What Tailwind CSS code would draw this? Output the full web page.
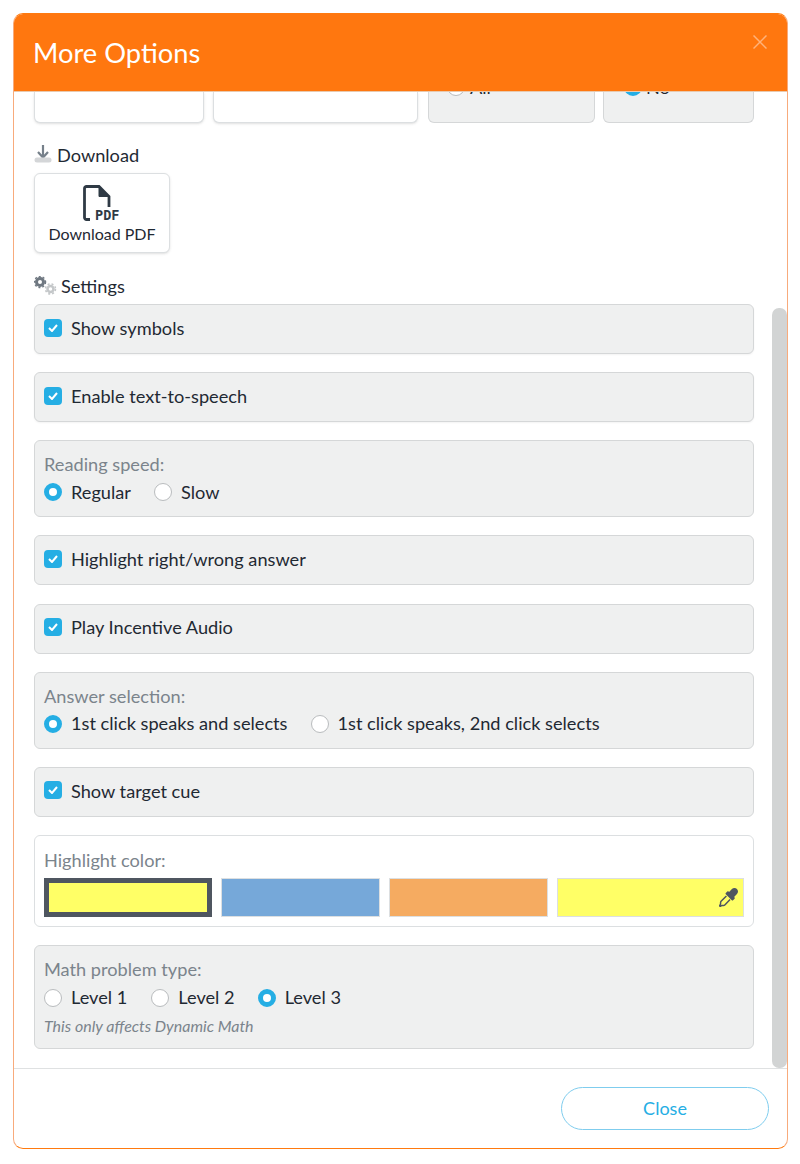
<!DOCTYPE html>
<html lang="en">
<head>
    <meta charset="UTF-8">
    <title>More Options</title>
    <script src="https://cdn.jsdelivr.net/npm/@tailwindcss/browser@4"></script>
</head>
<body class="bg-white font-['Lato',sans-serif] text-[#1f2933]">
    <div class="h-[1164px] pt-[13px] pl-[13px] pr-[12px]">
        <div class="relative flex flex-col h-[1136px] border border-x-[#f8ab7c] border-y-[#ff7a0f] rounded-[10px] overflow-hidden bg-white">
            <!-- Header -->
            <div class="flex justify-between h-[79px] shrink-0 -mx-px -mt-px bg-[#ff770f] border-b border-[#e8c9ae] pl-[20px] pr-[21px] text-white">
                <h2 class="text-[27.3px] leading-[80px]">More Options</h2>
                <svg class="mt-[22px]" width="14" height="14" viewBox="0 0 14 14" fill="none" stroke="#ffb27a" stroke-width="1.5"><path d="M0.5 0.5L13.5 13.5M13.5 0.5L0.5 13.5"/></svg>
            </div>

            <!-- Body -->
            <div class="relative h-[976px] shrink-0 overflow-hidden pl-[20px] pr-[33px]">
                <!-- Scrolled cards -->
                <div class="flex h-[31px] text-[18.2px]">
                    <div class="w-[170px] h-[31px] bg-white border border-[#dcdfe1] border-t-0 rounded-b-[6px] shadow-sm"></div>
                    <div class="ml-[9px] w-[205px] h-[31px] bg-white border border-[#dcdfe1] border-t-0 rounded-b-[6px] shadow-sm"></div>
                    <div class="relative ml-[10px] w-[167px] h-[31px] bg-[#eff0f0] border border-[#d5d7d8] border-t-0 rounded-b-[6px] overflow-hidden">
                        <span class="absolute left-[18px] top-[-14px] w-[18px] h-[18px] rounded-full bg-white border border-[#b9bcbe]"></span>
                        <span class="absolute left-[41px] top-[-17px] leading-[24px]">All</span>
                    </div>
                    <div class="relative ml-[8px] w-[151px] h-[31px] bg-[#eff0f0] border border-[#d5d7d8] border-t-0 rounded-b-[6px] overflow-hidden">
                        <span class="absolute left-[20px] top-[-14px] w-[18px] h-[18px] rounded-full bg-[#25aee4]"></span>
                        <span class="absolute left-[42px] top-[-17px] leading-[24px]">No</span>
                    </div>
                </div>

                <!-- Download -->
                <div class="flex items-center h-[24px] mt-[21px] text-[18.2px]">
                    <svg width="18" height="18" viewBox="0 0 18 18" class="mr-[5px] -mt-[5px]">
                        <path d="M9 0v12M4 7l5 5.500L14 7" fill="none" stroke="#76808a" stroke-width="2.200"/>
                        <rect x="0.500" y="12.500" width="17" height="5" rx="2.500" fill="#d4d6d8"/>
                    </svg>
                    Download
                </div>
                <div class="relative flex flex-col items-center w-[136px] h-[80px] mt-[5px] bg-white border border-[#dcdfe1] rounded-[6px] shadow-sm pt-[11px] text-[16px]">
                    <svg class="-ml-[10px]" width="28" height="36" viewBox="0 0 28 36" fill="none">
                        <path d="M7 34.500H3.500A2 2 0 0 1 1.500 32.500V3.500A2 2 0 0 1 3.500 1.500H16L26 11.500V22" stroke="#2f3a45" stroke-width="2.800"/>
                        <path d="M16 1.500V11.500H26z" fill="#2f3a45" stroke="#2f3a45" stroke-width="1"/>
                    </svg>
                    <span class="absolute left-[60px] top-[34px] text-[13.5px] leading-[15px] font-bold text-[#2f3a45] font-['DejaVu_Sans_Mono',monospace]">PDF</span>
                    <span class="leading-[18px] mt-[4px]">Download PDF</span>
                </div>

                <!-- Settings -->
                <div class="flex items-center h-[24px] mt-[22px] text-[18.2px]">
                    <svg width="23" height="20" viewBox="0 0 23 20" class="mr-[4px] -mt-[2px]">
                        <circle cx="6" cy="6" r="3.500" fill="none" stroke="#6f7881" stroke-width="3"/>
                        <circle cx="6" cy="6" r="5.500" fill="none" stroke="#6f7881" stroke-width="1.500" stroke-dasharray="2 2"/>
                        <circle cx="16.500" cy="13" r="3" fill="none" stroke="#c4c7c9" stroke-width="2.500"/>
                        <circle cx="16.500" cy="13" r="5" fill="none" stroke="#c4c7c9" stroke-width="1.500" stroke-dasharray="2 2"/>
                    </svg>
                    Settings
                </div>

                <div class="flex flex-col gap-[18.15px] mt-[5px] text-[18.2px]">
                    <div class="flex items-center h-[50px] px-[9px] pb-[1px] bg-[#eff0f0] border border-[#d5d7d8] rounded-[6px] shadow-xs">
                        <span class="flex items-center justify-center w-[18px] h-[18px] rounded-[4px] bg-[#25aee4] -mt-[2px]"><svg width="10" height="8" viewBox="0 0 10 8" fill="none" stroke="white" stroke-width="2"><path d="M1 4l3 3 5-6"/></svg></span>
                        <span class="ml-[9px]">Show symbols</span>
                    </div>
                    <div class="flex items-center h-[50px] px-[9px] pb-[1px] bg-[#eff0f0] border border-[#d5d7d8] rounded-[6px] shadow-xs">
                        <span class="flex items-center justify-center w-[18px] h-[18px] rounded-[4px] bg-[#25aee4] -mt-[2px]"><svg width="10" height="8" viewBox="0 0 10 8" fill="none" stroke="white" stroke-width="2"><path d="M1 4l3 3 5-6"/></svg></span>
                        <span class="ml-[9px]">Enable text-to-speech</span>
                    </div>
                    <div class="h-[77px] px-[9px] pt-[11px] bg-[#eff0f0] border border-[#d5d7d8] rounded-[6px]">
                        <div class="leading-[24px] text-[#7b848c]">Reading speed:</div>
                        <div class="flex items-center h-[28px] mt-[2px]">
                            <span class="w-[18px] h-[18px] rounded-full border-[5px] border-[#25aee4] bg-white"></span>
                            <span class="ml-[9px]">Regular</span>
                            <span class="ml-[23px] w-[18px] h-[18px] rounded-full border border-[#b9bcbe] bg-white"></span>
                            <span class="ml-[9px]">Slow</span>
                        </div>
                    </div>
                    <div class="flex items-center h-[50px] px-[9px] pb-[1px] bg-[#eff0f0] border border-[#d5d7d8] rounded-[6px]">
                        <span class="flex items-center justify-center w-[18px] h-[18px] rounded-[4px] bg-[#25aee4] -mt-[2px]"><svg width="10" height="8" viewBox="0 0 10 8" fill="none" stroke="white" stroke-width="2"><path d="M1 4l3 3 5-6"/></svg></span>
                        <span class="ml-[9px]">Highlight right/wrong answer</span>
                    </div>
                    <div class="flex items-center h-[50px] px-[9px] pb-[1px] bg-[#eff0f0] border border-[#d5d7d8] rounded-[6px]">
                        <span class="flex items-center justify-center w-[18px] h-[18px] rounded-[4px] bg-[#25aee4] -mt-[2px]"><svg width="10" height="8" viewBox="0 0 10 8" fill="none" stroke="white" stroke-width="2"><path d="M1 4l3 3 5-6"/></svg></span>
                        <span class="ml-[9px]">Play Incentive Audio</span>
                    </div>
                    <div class="h-[77px] px-[9px] pt-[11px] bg-[#eff0f0] border border-[#d5d7d8] rounded-[6px]">
                        <div class="leading-[24px] text-[#7b848c]">Answer selection:</div>
                        <div class="flex items-center h-[28px] mt-[2px]">
                            <span class="w-[18px] h-[18px] rounded-full border-[5px] border-[#25aee4] bg-white"></span>
                            <span class="ml-[9px]">1st click speaks and selects</span>
                            <span class="ml-[23px] w-[18px] h-[18px] rounded-full border border-[#b9bcbe] bg-white"></span>
                            <span class="ml-[9px]">1st click speaks, 2nd click selects</span>
                        </div>
                    </div>
                    <div class="flex items-center h-[50px] px-[9px] pb-[1px] bg-[#eff0f0] border border-[#d5d7d8] rounded-[6px]">
                        <span class="flex items-center justify-center w-[18px] h-[18px] rounded-[4px] bg-[#25aee4] -mt-[2px]"><svg width="10" height="8" viewBox="0 0 10 8" fill="none" stroke="white" stroke-width="2"><path d="M1 4l3 3 5-6"/></svg></span>
                        <span class="ml-[9px]">Show target cue</span>
                    </div>
                    <div class="h-[92px] px-[9px] pt-[12px] bg-white border border-[#dcdfe1] rounded-[6px]">
                        <div class="leading-[24px] text-[#7b848c]">Highlight color:</div>
                        <div class="flex gap-[9px] mt-[6px] h-[39px]">
                            <div class="w-[168px] bg-[#ffff66] border-[5px] border-[#4f5660]"></div>
                            <div class="w-[159px] bg-[#76a8d9] border border-[#dcdfe1]"></div>
                            <div class="w-[159px] bg-[#f5ab61] border border-[#dcdfe1]"></div>
                            <div class="relative w-[187px] bg-[#ffff66] border border-[#dcdfe1]">
                                <svg class="absolute right-[5px] top-[9px]" width="19" height="19" viewBox="0 0 512 512">
                                    <path d="M200 215L62 350Q42 370 42 395V432L14 480L32 498L80 470H118Q143 470 163 450L298 312" fill="none" stroke="#4f5660" stroke-width="40"/>
                                    <path d="M483.880 28.120c-37.470-37.500-98.280-37.500-135.750 0l-77.090 77.090-13.100-13.100c-9.440-9.440-24.650-9.300-33.940 0l-40.970 40.970c-9.370 9.370-9.370 24.570 0 33.940l161.940 161.940c9.440 9.440 24.650 9.300 33.940 0L419.880 288c9.370-9.370 9.370-24.570 0-33.940l-13.100-13.100 77.090-77.090c37.510-37.480 37.510-98.260.01-135.750z" fill="#4f5660"/>
                                </svg>
                            </div>
                        </div>
                    </div>
                    <div class="h-[104px] px-[9px] pt-[11px] bg-[#eff0f0] border border-[#d5d7d8] rounded-[6px]">
                        <div class="leading-[24px] text-[#7b848c]">Math problem type:</div>
                        <div class="flex items-center h-[28px] mt-[3px]">
                            <span class="w-[18px] h-[18px] rounded-full border border-[#b9bcbe] bg-white"></span>
                            <span class="ml-[9px]">Level 1</span>
                            <span class="ml-[24px] w-[18px] h-[18px] rounded-full border border-[#b9bcbe] bg-white"></span>
                            <span class="ml-[9px]">Level 2</span>
                            <span class="ml-[23px] w-[18px] h-[18px] rounded-full border-[5px] border-[#25aee4] bg-white"></span>
                            <span class="ml-[9px]">Level 3</span>
                        </div>
                        <div class="mt-[3px] text-[16px] leading-[22px] italic text-[#7b848c]">This only affects Dynamic Math</div>
                    </div>
                </div>

                <!-- Scrollbar -->
                <div class="absolute right-0 top-[216px] bottom-0 w-[15px] bg-[#d2d4d4] rounded-[7px]"></div>
            </div>

            <!-- Footer -->
            <div class="flex justify-end items-start h-[81px] border-t border-[#dfe1e2] pt-[18px] pr-[18px]">
                <button class="w-[208px] h-[43px] rounded-full border border-[#7fcdee] text-[18px] text-[#25aee4]">Close</button>
            </div>
        </div>
    </div>
</body>
</html>
